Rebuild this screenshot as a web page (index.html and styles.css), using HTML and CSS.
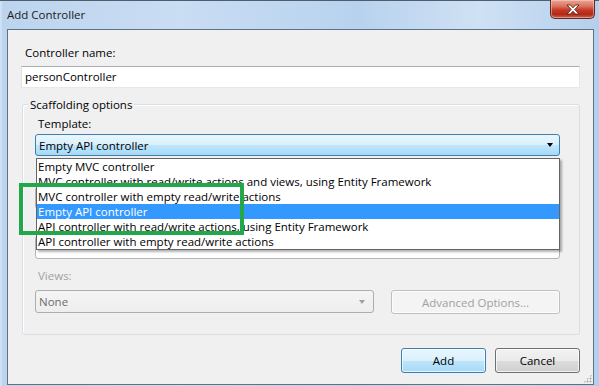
FILE: index.html
```html
<!DOCTYPE html>
<html lang="en">
<head>
  <meta charset="UTF-8" />
  <title>Add Controller</title>
  <link rel="stylesheet" href="styles.css">
</head>
<body>
  <!-- Dialog window -->
  <div class="window">
    <div class="titlebar">
      <span class="title">Add Controller</span>
      <button class="close-btn" title="Close">
        <svg viewBox="0 0 14 11" width="14" height="11" xmlns="http://www.w3.org/2000/svg">
          <path d="M1 1H4.5L7 3.8L9.5 1H13L8.8 5.5L13 10H9.5L7 7.2L4.5 10H1L5.2 5.5Z" fill="#fff" stroke="#5a241b" stroke-width="0.9" stroke-linejoin="round"/>
        </svg>
      </button>
    </div>

    <div class="client">
      <div class="field-label">Controller name:</div>
      <div class="textbox">personController</div>

      <!-- Scaffolding options group -->
      <div class="group">
        <span class="group-legend">Scaffolding options</span>

        <div class="field-label">Template:</div>
        <div class="combo-wrap">
          <div class="combo combo-open">
            <span>Empty API controller</span>
            <span class="arrow"></span>
          </div>
          <ul class="dropdown">
            <li>Empty MVC controller</li>
            <li>MVC controller with read/write actions and views, using Entity Framework</li>
            <li>MVC controller with empty read/write actions</li>
            <li class="selected">Empty API controller</li>
            <li>API controller with read/write actions, using Entity Framework</li>
            <li>API controller with empty read/write actions</li>
          </ul>
        </div>

        <div class="field-label disabled label-model">Model class:</div>
        <div class="combo combo-disabled combo-model"></div>
        <div class="field-label disabled label-context">Data context class:</div>
        <div class="combo combo-disabled combo-context"></div>

        <div class="field-label disabled label-views">Views:</div>
        <div class="views-row">
          <div class="combo combo-disabled combo-views">
            <span>None</span>
            <span class="arrow arrow-gray"></span>
          </div>
          <button class="btn btn-disabled">Advanced Options...</button>
        </div>
      </div>

      <div class="dialog-buttons">
        <button class="btn btn-default">Add</button>
        <button class="btn">Cancel</button>
      </div>

      <span class="grip"></span>
    </div>

    <!-- green annotation box drawn over the list -->
    <div class="mark-box"></div>
  </div>
</body>
</html>
```

FILE: styles.css
```css
/* Reset */
* {
  margin: 0;
  padding: 0;
  box-sizing: border-box;
}

body {
  font-family: 'Segoe UI', 'Open Sans', sans-serif;
  font-size: 11.5px;
  color: #000;
  background: #a9c7e8;
}

/* Window frame */
.window {
  position: relative;
  width: 599px;
  height: 386px;
  display: flex;
  flex-direction: column;
  padding: 0 5px 1px 7px;
  border-top: 1px solid #4f5d6c;
  background: linear-gradient(90deg, #bcd4ee 0, #c9ddf3 30%, #b8d2ee 60%, #cfe1f4 80%, #b4cfec 100%);
  box-shadow: inset 2px 0 0 #cfe0f3;
}

.titlebar {
  height: 28px;
  display: flex;
  justify-content: space-between;
  align-items: flex-start;
}

.title {
  margin-top: 6px;
  line-height: 16px;
  color: #1b1b1b;
}

.close-btn {
  width: 45px;
  height: 19px;
  margin-top: -1px;
  margin-right: -1px;
  border: 1px solid #5d2b24;
  border-top: none;
  border-radius: 0 0 5px 5px;
  background: linear-gradient(180deg, #e9a696 0, #d9735f 35%, #c63a25 55%, #b22814 80%, #cf6651 100%);
  box-shadow: inset 0 0 0 1px rgba(255, 220, 210, 0.45);
  display: flex;
  align-items: center;
  justify-content: center;
  padding-top: 1px;
}

/* Client area */
.client {
  position: relative;
  flex: 1;
  display: flex;
  flex-direction: column;
  background: #f0f0f0;
  border: 1px solid #5f7186;
  padding: 15px 13px 0 13px;
}

.field-label {
  line-height: 15px;
  padding-left: 4px;
}

.field-label.disabled {
  color: #a2a2a2;
}

.textbox {
  margin-top: 6px;
  height: 22px;
  background: #fff;
  border: 1px solid #abadb3;
  border-color: #abadb3 #e3e9ef #e3e9ef #e2e3ea;
  padding: 0 3px;
  line-height: 19px;
}

/* Group box */
.group {
  position: relative;
  margin-top: 16px;
  margin-left: 1px;
  border: 1px solid #d5dfe5;
  border-radius: 3px;
  box-shadow: inset 1px 1px 0 #fff;
  padding: 12px 19px 20px 12px;
}

.group-legend {
  position: absolute;
  top: -8px;
  left: 5px;
  padding: 0 2px;
  background: #f0f0f0;
  line-height: 15px;
}

.group .field-label {
  line-height: 14px;
  padding-left: 3px;
}

/* Combo boxes */
.combo-wrap {
  position: relative;
  margin-top: 3px;
}

.combo {
  height: 22px;
  display: flex;
  align-items: center;
  justify-content: space-between;
  padding: 0 6px 0 3px;
  border-radius: 3px;
}

.combo-open {
  border: 1px solid #3c7fb1;
  background: linear-gradient(180deg, #eaf6fd 0, #d9f0fc 50%, #bee6fd 51%, #a7d9f5 100%);
}

.combo-disabled {
  border: 1px solid #b4b4b4;
  background: #fff;
}

.arrow {
  width: 0;
  height: 0;
  border-left: 3.5px solid transparent;
  border-right: 3.5px solid transparent;
  border-top: 4px solid #000;
}

.arrow-gray {
  border-top-color: #a0a0a0;
}

.label-model {
  margin-top: 14px;
}

.combo-model {
  margin-top: 3px;
}

.label-context {
  margin-top: 11px;
}

.combo-context {
  margin-top: 2px;
  height: 23px;
}

.label-views {
  margin-top: 10px;
}

.views-row {
  margin-top: 7px;
  display: flex;
  align-items: flex-start;
  gap: 17px;
}

.combo-views {
  width: 339px;
  height: 23px;
  background: linear-gradient(180deg, #f4f4f4, #eeeeee);
  border-color: #adadad;
  color: #6d6d6d;
  padding-right: 8px;
}

/* Dropdown list */
.dropdown {
  position: absolute;
  top: calc(100% + 2px);
  left: 1px;
  right: 0;
  list-style: none;
  background: #fff;
  border: 1px solid #646464;
  box-shadow: 2px 2px 2px rgba(0, 0, 0, 0.3);
  z-index: 10;
}

.dropdown li {
  height: 15px;
  line-height: 15px;
  padding-left: 1px;
  white-space: nowrap;
  overflow: hidden;
}

.dropdown li.selected {
  background: #3399ff;
  color: #fff;
}

/* Buttons */
.btn {
  font-family: inherit;
  font-size: inherit;
  color: #000;
  height: 25px;
  width: 85px;
  border: 1px solid #707070;
  border-radius: 3px;
  background: linear-gradient(180deg, #f2f2f2 0, #ebebeb 50%, #dddddd 51%, #cfcfcf 100%);
  box-shadow: inset 0 0 0 1px rgba(255, 255, 255, 0.7);
}

.btn-default {
  border-color: #3c7fb1;
  background: linear-gradient(180deg, #eaf6fd 0, #d9f0fc 50%, #bee6fd 51%, #a7d9f5 100%);
}

.btn-disabled {
  width: 169px;
  height: 24px;
  color: #a0a0a0;
  border-color: #c0c0c0;
  background: #f4f4f4;
}

.dialog-buttons {
  margin-top: 13px;
  display: flex;
  justify-content: flex-end;
  gap: 9px;
}

.grip {
  position: absolute;
  right: 1px;
  bottom: 1px;
  width: 9px;
  height: 9px;
  background-image: radial-gradient(circle, #a9a9a9 0.8px, transparent 1.2px);
  background-size: 3px 3px;
  clip-path: polygon(100% 0, 100% 100%, 0 100%);
}

/* Annotation */
.mark-box {
  position: absolute;
  left: 19px;
  top: 182px;
  width: 225px;
  height: 52px;
  border: 4px solid #22a84a;
  z-index: 20;
}
```
